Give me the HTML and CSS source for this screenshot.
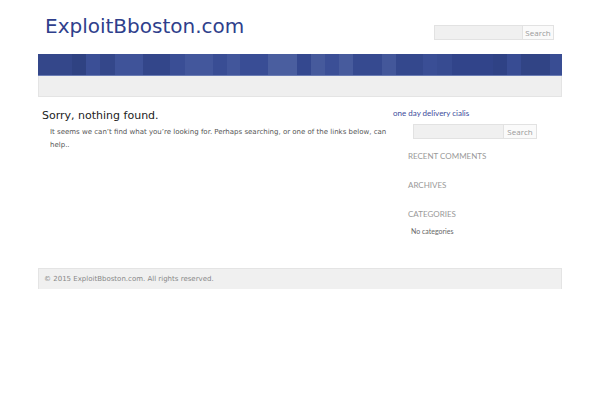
FILE: index.html
```html
<!DOCTYPE html>
<html lang="en">
<head>
    <meta charset="UTF-8">
    <title>ExploitBboston.com</title>
    <link rel="stylesheet" href="styles.css">
</head>
<body>
    <div id="wrap">
        <div class="header">
            <h1 class="site-title"><a href="#">ExploitBboston.com</a></h1>
            <form class="search-form head-search">
                <input type="text" value="">
                <button type="button">Search</button>
            </form>
        </div>
        <div class="banner"></div>
        <div class="nav"></div>
        <div class="main">
            <div class="content">
                <h2>Sorry, nothing found.</h2>
                <p>It seems we can’t find what you’re looking for. Perhaps searching, or one of the links below, can help..</p>
            </div>
            <div class="sidebar">
                <a class="side-link" href="#">one day delivery cialis</a>
                <form class="search-form side-search">
                    <input type="text" value="">
                    <button type="button">Search</button>
                </form>
                <h3>RECENT COMMENTS</h3>
                <h3>ARCHIVES</h3>
                <h3>CATEGORIES</h3>
                <ul>
                    <li>No categories</li>
                </ul>
            </div>
        </div>
        <div class="footer">© 2015 ExploitBboston.com. All rights reserved.</div>
    </div>
</body>
</html>
```

FILE: styles.css
```css
body{margin: 0;background: #fff;font-family: "DejaVu Sans", Verdana, sans-serif;}
#wrap{width: 524px;margin: 0 38px;}
.header{display: flex;justify-content: space-between;align-items: flex-start;height: 54px;}
.site-title{margin: 14px 0 0 7px;font-size: 20px;font-weight: normal;}
.site-title a{color: #2f3f8c;text-decoration: none;}
.search-form{display: flex;}
.search-form input{box-sizing: border-box;height: 15px;margin: 0;padding: 0 3px;border: 1px solid #e2e2e2;border-right: none;background: #f0f0f0;}
.search-form button{box-sizing: border-box;height: 15px;margin: 0;padding: 0;border: 1px solid #e2e2e2;background: #fafafa;color: #999;font-family: "Open Sans", sans-serif;font-size: 8px;line-height: 13px;}
.head-search{margin: 25px 8px 0 0;}
.head-search input{width: 88px;}
.head-search button{width: 32px;}
.banner{height: 21px;background: linear-gradient(to right,
    #34478a 0, #34478a 34px, #2f4282 34px, #2f4282 48px, #3b4f96 48px, #3b4f96 62px, #34478a 62px, #34478a 77px,
    #3f5399 77px, #3f5399 105px, #33468a 105px, #33468a 132px, #3a4e95 132px, #3a4e95 147px, #43579c 147px, #43579c 175px,
    #394d94 175px, #394d94 189px, #42569b 189px, #42569b 202px, #394d95 202px, #394d95 230px, #4a5e9f 230px, #4a5e9f 259px,
    #34488f 259px, #34488f 273px, #465a9c 273px, #465a9c 287px, #3b4f96 287px, #3b4f96 301px, #475b9d 301px, #475b9d 315px,
    #364a90 315px, #364a90 344px, #43579a 344px, #43579a 358px, #34488d 358px, #34488d 385px, #3a4e95 385px, #3a4e95 399px,
    #374b91 399px, #374b91 414px, #31448a 414px, #31448a 455px, #2f4285 455px, #2f4285 469px, #384c93 469px, #384c93 483px,
    #314485 483px, #314485 512px, #394d93 512px, #394d93 524px);
    border-bottom: 1px solid #6b7db5;}
.nav{height: 20px;background: #efefef;border: 1px solid #e4e4e4;border-top: none;}
.main{display: flex;min-height: 171px;}
.content{width: 351px;padding: 12px 0 0 4px;}
.content h2{margin: 0;font-size: 11px;font-weight: normal;color: #222;}
.content p{margin: 4px 0 0 8px;font-size: 7px;line-height: 13px;color: #555;}
.sidebar{padding: 11px 0 0 0;font-family: Lato, sans-serif;font-size: 8px;}
.side-link{display: block;color: #3b4b9b;text-decoration: none;}
.side-search{margin: 6px 0 0 20px;}
.side-search input{width: 90px;}
.side-search button{width: 34px;}
.sidebar h3{margin: 12px 0 19px 15px;font-size: 8px;font-weight: normal;color: #999;}
.sidebar ul{list-style: none;margin: -11px 0 0 18px;padding: 0;font-size: 7px;color: #666;}
.footer{height: 20px;padding: 0 5px;background: #f0f0f0;border: 1px solid #e4e4e4;border-bottom: none;font-size: 7px;line-height: 20px;color: #888;}
```
